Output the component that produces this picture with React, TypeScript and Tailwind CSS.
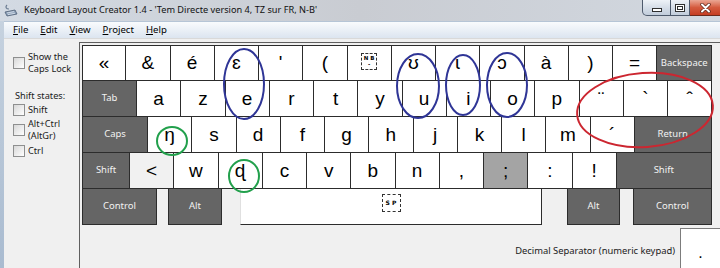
import React from 'react';

const letter =
  "w-[44.25px] bg-white text-[19px] text-black font-['Liberation_Sans','DejaVu_Sans',sans-serif]";
const dark = "bg-[#656565] text-[9.5px] text-[#f2f2f2]";

function Key({ children, className }: { children?: React.ReactNode; className: string }) {
  return (
    <div className={`flex shrink-0 items-center justify-center border-r border-b border-[#2c2c2c] ${className}`}>
      {children}
    </div>
  );
}

function Checkbox() {
  return <div className="h-[12px] w-[12px] shrink-0 border border-[#8e8f8f] bg-gradient-to-br from-[#d8d8d8] to-white" />;
}

const nb = (
  <span className="mb-[4px] flex h-[17px] w-[16px] flex-col items-center justify-center border border-dashed border-[#333] text-[5.5px] font-bold leading-[6px] text-black font-['DejaVu_Sans',sans-serif]">
    <span>N B</span>
    <span>-</span>
  </span>
);

const row1: React.ReactNode[] = ['«', '&', 'é', 'ɛ', "'", '(', nb, 'ʊ', 'ɩ', 'ɔ', 'à', ')', '='];
const row2 = ['a', 'z', 'e', 'r', 't', 'y', 'u', 'i', 'o', 'p', '¨', '`', 'ˆ'];
const row3 = ['ŋ', 's', 'd', 'f', 'g', 'h', 'j', 'k', 'l', 'm', '´'];
const row4 = ['<', 'w', 'ɖ', 'c', 'v', 'b', 'n', ',', ';', ':', '!'];

function AppIcon() {
  return (
    <svg width="14" height="15" viewBox="0 0 14 15" className="ml-[4px] mt-[3px] shrink-0">
      <path d="M3 2 C1 4, 2 6, 5 6" fill="none" stroke="#6a7c92" strokeWidth="1.2" />
      <path d="M1 9 L11 7 L13 11 L3 13 Z" fill="#8fa3bb" stroke="#4c5d73" strokeWidth="0.8" />
      <path d="M3 10 L10 8.6 M4 11.6 L11 10.2" stroke="#e8eef5" strokeWidth="0.7" />
    </svg>
  );
}

export default function App() {
  return (
    <div className="relative h-[268px] w-[720px] overflow-hidden bg-[#b9c8da] font-['Noto_Sans',sans-serif] text-black">
      {/* title bar */}
      <div className="flex h-[21px] items-start bg-gradient-to-r from-[#d3dae3] via-[#c9ccd2] to-[#d2d8e0]">
        <AppIcon />
        <span className="ml-[6px] mt-[3px] text-[9.2px] leading-[14px] text-[#111]">
          Keyboard Layout Creator 1.4 - 'Tem Directe version 4, TZ sur FR, N-B'
        </span>
        <div className="ml-auto flex h-[16px]">
          <div className="flex w-[29px] items-center justify-center rounded-bl-[5px] border border-t-0 border-[#4e5a6c] bg-gradient-to-b from-[#eef2f7] via-[#d6dee8] to-[#c2cddb]">
            <div className="mt-[4px] h-[4px] w-[10px] border border-[#2f2f2f] bg-white" />
          </div>
          <div className="flex w-[19px] items-center justify-center border-b border-r border-[#4e5a6c] bg-gradient-to-b from-[#eef2f7] via-[#d6dee8] to-[#c2cddb]">
            <div className="flex h-[8px] w-[10px] items-center justify-center border border-[#2f2f2f] bg-white">
              <div className="h-[4px] w-[6px] border border-[#2f2f2f]" />
            </div>
          </div>
          <div className="flex w-[30px] items-center justify-center border-b border-[#6d2a1b] bg-gradient-to-b from-[#eaa694] via-[#d45a3e] to-[#c53d22]">
            <svg width="11" height="10" viewBox="0 0 11 10">
              <path d="M2 1.5 L9 8.5 M9 1.5 L2 8.5" stroke="#5a2418" strokeWidth="3.4" strokeLinecap="round" />
              <path d="M2 1.5 L9 8.5 M9 1.5 L2 8.5" stroke="#ffffff" strokeWidth="2" strokeLinecap="round" />
            </svg>
          </div>
        </div>
      </div>

      <div className="flex h-[247px]">
        {/* window frame */}
        <div className="w-[4px] shrink-0 bg-gradient-to-b from-[#c6d2df] to-[#a9bbd0]" />

        <div className="flex flex-1 flex-col bg-[#f0f0f0]">
          {/* menu bar */}
          <div className="flex h-[20px] items-center gap-[12px] border-t border-[#b6c5d6] bg-gradient-to-b from-[#f9fbfd] to-[#dce5f0] pl-[9px] text-[9.6px]">
            <span><u>F</u>ile</span>
            <span><u>E</u>dit</span>
            <span><u>V</u>iew</span>
            <span><u>P</u>roject</span>
            <span><u>H</u>elp</span>
          </div>

          <div className="flex flex-1 border-t border-[#d9d9d9]">
            {/* left options */}
            <div className="flex w-[75px] shrink-0 flex-col pl-[9px] pt-[12px] text-[9.2px] leading-[12px] text-[#1a1a1a]">
              <div className="flex items-center gap-[3px]">
                <Checkbox />
                <span>Show the<br />Caps Lock</span>
              </div>
              <div className="ml-[2px] mt-[15px]">Shift states:</div>
              <div className="mt-[2px] flex items-center gap-[3px]">
                <Checkbox />
                <span>Shift</span>
              </div>
              <div className="mt-[2px] flex items-center gap-[3px]">
                <Checkbox />
                <span>Alt+Ctrl<br />(AltGr)</span>
              </div>
              <div className="mt-[3px] flex items-center gap-[3px]">
                <Checkbox />
                <span>Ctrl</span>
              </div>
            </div>

            {/* keyboard */}
            <div className="mt-[3px] flex flex-1 flex-col border-l border-t border-[#5f5f5f] pl-[2px] pt-[2px]">
              <div className="flex h-[36px]">
                {row1.map((c, i) => (
                  <Key key={i} className={`${letter} border-t ${i === 0 ? 'border-l' : ''}`}>{c}</Key>
                ))}
                <Key className={`${dark} w-[55px] border-t`}>Backspace</Key>
              </div>
              <div className="flex h-[36px]">
                <Key className={`${dark} w-[55px] border-l`}>Tab</Key>
                {row2.map((c, i) => (
                  <Key key={i} className={`${letter} pt-[2px]`}>{c}</Key>
                ))}
              </div>
              <div className="flex h-[36px]">
                <Key className={`${dark} w-[66px] border-l`}>Caps</Key>
                {row3.map((c, i) => (
                  <Key key={i} className={`${letter} pt-[2px]`}>{c}</Key>
                ))}
                <Key className={`${dark} w-[77px]`}>Return</Key>
              </div>
              <div className="flex h-[36px]">
                <Key className={`${dark} w-[48px] border-l`}>Shift</Key>
                {row4.map((c, i) => (
                  <Key
                    key={i}
                    className={`${letter} pt-[2px] ${c === '<' ? '!bg-[#f1f1f1]' : ''} ${c === ';' ? '!bg-[#a4a4a4]' : ''}`}
                  >
                    {c}
                  </Key>
                ))}
                <Key className={`${dark} w-[95px]`}>Shift</Key>
              </div>
              <div className="flex h-[36px]">
                <Key className={`${dark} w-[75px] border-l`}>Control</Key>
                <Key className={`${dark} ml-[11px] w-[54px] border-l`}>Alt</Key>
                <Key className="ml-[18px] w-[302px] border-l border-l-[#e0e0e0] bg-white">
                  <span className="mb-[8px] flex h-[18px] w-[19px] items-center justify-center border border-dashed border-[#333] text-[6px] font-bold text-black font-['DejaVu_Sans',sans-serif]">
                    S P
                  </span>
                </Key>
                <Key className={`${dark} ml-[25px] w-[53px] border-l`}>Alt</Key>
                <Key className={`${dark} ml-[13px] w-[79px] border-l`}>Control</Key>
              </div>

              <div className="mt-[3px] flex flex-1 items-start justify-end">
                <span className="mr-[5px] mt-[16px] text-[9.4px] text-[#1a1a1a]">Decimal Separator (numeric keypad)</span>
                <div className="flex h-[40px] w-[40px] items-start justify-center border-l border-t border-[#7c7c7c] bg-white pt-[12px] text-[16px] font-['Liberation_Sans',sans-serif]">
                  .
                </div>
              </div>
            </div>
          </div>
        </div>
      </div>

      {/* hand-drawn annotations */}
      <svg className="pointer-events-none absolute left-0 top-0" width="720" height="268" viewBox="0 0 720 268">
        <g fill="none" stroke="#2f3596" strokeWidth="2">
          <ellipse cx="244" cy="84" rx="20" ry="35" />
          <ellipse cx="418" cy="86" rx="21" ry="32" />
          <ellipse cx="463" cy="85" rx="17" ry="30" />
          <ellipse cx="507" cy="85" rx="20" ry="32" />
        </g>
        <g fill="none" stroke="#22a04c" strokeWidth="2">
          <ellipse cx="172" cy="141" rx="15" ry="14" />
          <ellipse cx="244" cy="176" rx="15" ry="16" />
        </g>
        <ellipse cx="645" cy="110" rx="68" ry="37" fill="none" stroke="#cc2630" strokeWidth="2" transform="rotate(-4 645 110)" />
      </svg>
    </div>
  );
}
